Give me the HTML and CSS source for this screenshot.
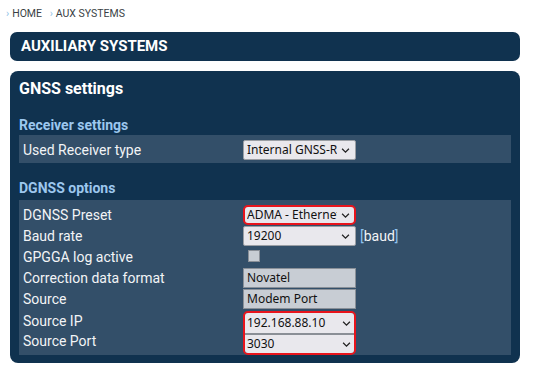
FILE: index.html
```html
<!DOCTYPE html>
<html lang="en">
<head>
  <meta charset="UTF-8" />
  <title>Aux Systems</title>
  <link rel="stylesheet" href="styles.css">
</head>
<body>
  <div class="crumbs">
    <span class="crumb-sep">›</span><span>HOME</span>
    <span class="crumb-sep">›</span><span>AUX SYSTEMS</span>
  </div>

  <div class="page-head">AUXILIARY SYSTEMS</div>

  <div class="panel">
    <div class="panel-title">GNSS settings</div>

    <div class="section-title first">Receiver settings</div>
    <div class="box single">
      <div class="label">Used Receiver type</div>
      <div class="field"><div class="select"><span class="val">Internal GNSS-Receiver</span><svg class="chev" viewBox="0 0 8 5"><path d="M0.6 0.8 L4 4.1 L7.4 0.8"/></svg></div></div>
    </div>

    <div class="section-title">DGNSS options</div>
    <div class="box">
      <div class="label">DGNSS Preset</div>
      <div class="field"><div class="select marked"><span class="val">ADMA - Ethernet</span><svg class="chev" viewBox="0 0 8 5"><path d="M0.6 0.8 L4 4.1 L7.4 0.8"/></svg></div></div>

      <div class="label">Baud rate</div>
      <div class="field"><div class="select"><span class="val">19200</span><svg class="chev" viewBox="0 0 8 5"><path d="M0.6 0.8 L4 4.1 L7.4 0.8"/></svg></div><span class="unit"><b>[</b>baud<b>]</b></span></div>

      <div class="label">GPGGA log active</div>
      <div class="field"><div class="check"></div></div>

      <div class="label">Correction data format</div>
      <div class="field"><div class="readonly">Novatel</div></div>

      <div class="label">Source</div>
      <div class="field"><div class="readonly">Modem Port</div></div>

      <div class="label tall">Source IP</div>
      <div class="field group-cell">
        <div class="group">
          <div class="select inner"><span class="val">192.168.88.10</span><svg class="chev" viewBox="0 0 8 5"><path d="M0.6 0.8 L4 4.1 L7.4 0.8"/></svg></div>
          <div class="select inner"><span class="val">3030</span><svg class="chev" viewBox="0 0 8 5"><path d="M0.6 0.8 L4 4.1 L7.4 0.8"/></svg></div>
        </div>
      </div>
      <div class="label">Source Port</div>
    </div>
  </div>
</body>
</html>
```

FILE: styles.css
```css
* {
  box-sizing: border-box;
  margin: 0; padding: 0;
}
body {
  background: #fff;
  font-family: Roboto, "Liberation Sans", sans-serif;
  padding: 0 13px 0 10px;
}
.crumbs {
  margin-left: -6px;
  padding-top: 7px;
  height: 32px;
  font-size: 10.5px;
  line-height: 13px;
  color: #3a3f45;
}
.crumbs span { margin-right: 3px; }
.crumb-sep { color: #8fbfe6; margin-left: 2px; }
.page-head {
  background: #10324f;
  border-radius: 7px;
  height: 29px;
  line-height: 29px;
  padding-left: 11px;
  color: #fff;
  font-weight: bold;
  font-size: 15px;
  margin-bottom: 10px;
}
.panel {
  background: #10324f;
  border-radius: 8px;
  padding: 8px 9px 8px 9px;
}
.panel-title {
  color: #fff;
  font-weight: bold;
  font-size: 16px;
  line-height: 20px;
  margin-bottom: 17px;
}
.section-title {
  color: #9cc7ee;
  font-weight: bold;
  font-size: 14px;
  line-height: 18px;
  margin-bottom: 3px;
}
.section-title.first { margin-bottom: 1px; }
.box {
  background: #334f69;
  display: grid;
  grid-template-columns: 220px 1fr;
  grid-auto-rows: 21px;
  padding: 5px 4px 3px 4px;
}
.box.single {
  padding: 5px 4px 3px 4px;
  grid-auto-rows: 20px;
  margin-bottom: 16px;
}
.label {
  color: #f2f4f6;
  font-size: 14px;
  line-height: 20px;
}
.field {
  display: flex;
  align-items: flex-start;
}
.select, .readonly {
  width: 113px;
  height: 20px;
  border: 1px solid #9a9ea4;
  font-family: "Noto Sans", "Open Sans", sans-serif;
  font-size: 12px;
  line-height: 18px;
  color: #111;
  padding-left: 3px;
  white-space: nowrap;
  overflow: hidden;
}
.select {
  display: flex;
  align-items: center;
  background: #e9e8ed;
  border-radius: 2px;
  padding-right: 5px;
}
.val {
  flex: 1;
  overflow: hidden;
  white-space: nowrap;
}
.select.marked {
  border: 2px solid #e8141c;
  border-radius: 5px;
  line-height: 16px;
  padding-left: 2px;
  padding-right: 4px;
}
.chev {
  flex: none;
  margin-left: 4px;
  width: 9px;
  height: 5px;
  fill: none;
  stroke: #222;
  stroke-width: 1.3;
}
.readonly {
  background: #c8cdd4;
  border-color: #8a9098;
}
.unit {
  color: #f2f4f6;
  font-size: 14px;
  line-height: 20px;
  margin-left: 4px;
}
.unit b { color: #8fc2ee; font-weight: normal; }
.check {
  width: 12px;
  height: 12px;
  margin: 3px 0 0 5px;
  background: #c8cdd4;
  border: 1px solid #8a9098;
}
.group-cell {
  grid-row: span 2;
  padding-top: 1px;
}
.group {
  width: 113px;
  border: 2px solid #e8141c;
  border-radius: 5px;
  overflow: hidden;
}
.select.inner {
  width: 109px;
  height: 20px;
  border: none;
  border-radius: 0;
  line-height: 20px;
  padding-left: 2px;
  padding-right: 3px;
}
.select.inner + .select.inner { border-top: 2px solid #8a8f96; }
.label.tall { padding-top: 1px; }
```
